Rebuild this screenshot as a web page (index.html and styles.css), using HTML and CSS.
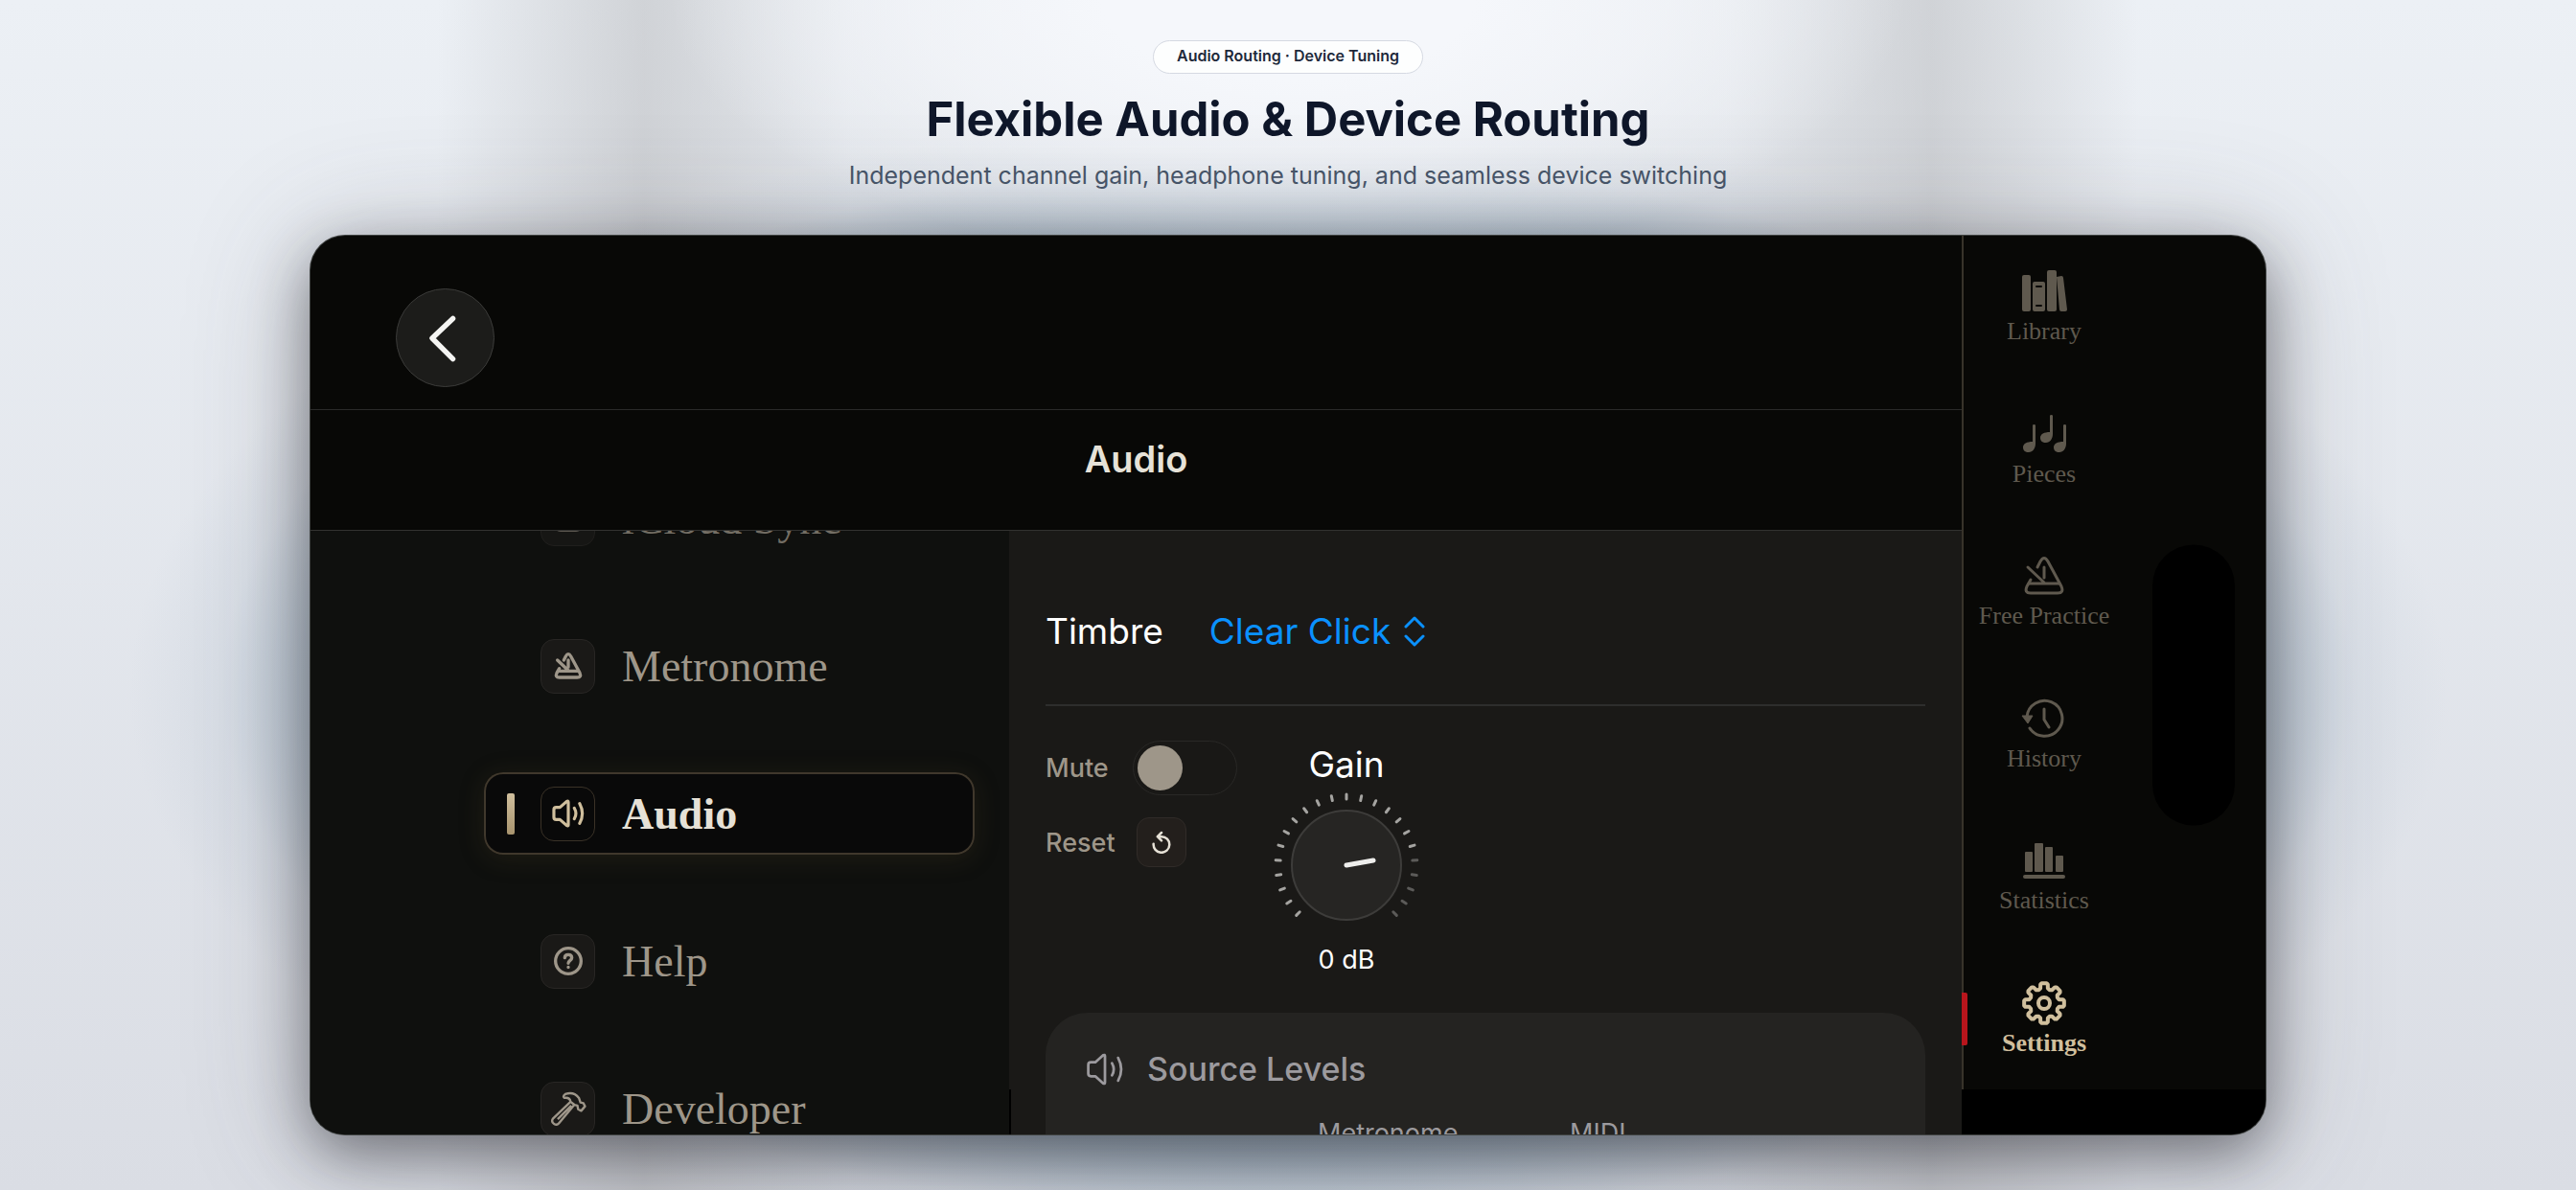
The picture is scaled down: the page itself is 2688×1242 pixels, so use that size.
FILE: index.html
```html
<!DOCTYPE html>
<html lang="en">
<head>
    <meta charset="UTF-8">
    <meta name="viewport" content="width=device-width, initial-scale=1.0">
    <title>Flexible Audio &amp; Device Routing</title>
    <link rel="stylesheet" href="styles.css">
</head>
<body>
    <svg width="0" height="0" class="defs" aria-hidden="true">
        <symbol id="metronome" viewBox="0 0 48 48">
            <g fill="none" stroke="currentColor" stroke-linecap="round" stroke-linejoin="round">
                <path d="M17 15l3-6q4-7 8 0l14 26q3 7-4 7H10q-7 0-4-7l4-7"/>
                <path d="M8 32h32M7 15l17 16M24 15v11"/>
            </g>
        </symbol>
        <symbol id="speaker" viewBox="0 0 48 48">
            <g fill="none" stroke="currentColor" stroke-linecap="round" stroke-linejoin="round">
                <path d="M5 19q0-3 3-3h5l9-8q2-1 2 1v30q0 2-2 1l-9-8H8q-3 0-3-3z"/>
                <path d="M32 17q4 7 0 14M39 11q7 13 0 26"/>
            </g>
        </symbol>
    </svg>

    <header class="intro">
        <span class="badge">Audio Routing · Device Tuning</span>
        <h1>Flexible Audio &amp; Device Routing</h1>
        <p>Independent channel gain, headphone tuning, and seamless device switching</p>
    </header>

    <div class="device">
        <div class="screen">
            <div class="toolbar">
                <button class="back" aria-label="Back">
                    <svg viewBox="0 0 48 48"><path d="M31 5L11 24l20 20" fill="none" stroke="currentColor" stroke-width="5" stroke-linecap="round" stroke-linejoin="round"/></svg>
                </button>
            </div>
            <h2 class="screen-title">Audio</h2>

            <div class="panes">
                <nav class="sections">
                    <a href="#" class="section faded">
                        <span class="tile"><svg viewBox="0 0 48 48"><path d="M12 42q-8 0-8-8t8-8q2-10 12-10t12 10q8 0 8 8t-8 8z" fill="none" stroke="currentColor" stroke-width="5"/></svg></span>
                        iCloud Sync
                    </a>
                    <a href="#" class="section">
                        <span class="tile"><svg class="heavy"><use href="#metronome"/></svg></span>
                        Metronome
                    </a>
                    <a href="#" class="section active">
                        <span class="tile"><svg class="wide"><use href="#speaker"/></svg></span>
                        Audio
                    </a>
                    <a href="#" class="section">
                        <span class="tile"><svg viewBox="0 0 48 48"><g fill="none" stroke="currentColor" stroke-width="5" stroke-linecap="round"><circle cx="24" cy="24" r="20"/><path d="M18.500 19q0-5 5.500-5t5.500 5c0 4-5.500 4-5.500 8.500M24 33.500v.2"/></g></svg></span>
                        Help
                    </a>
                    <a href="#" class="section">
                        <span class="tile"><svg class="wide" viewBox="0 0 48 48"><path d="M20 5q11-4 18 5l2 6 4 1 2 4-5 6-4-2-1-5-4-1L12 43q-3 4-7 1t-1-7l23-22q-1-6-8-5-3-2 1-5zM27 15l5 4M10 38l18-18" fill="none" stroke="currentColor" stroke-width="3" stroke-linejoin="round"/></svg></span>
                        Developer
                    </a>
                </nav>

                <main class="detail">
                    <div class="timbre">
                        <span id="timbre-label">Timbre</span>
                        <button class="picker" aria-labelledby="timbre-label timbre-value">
                            <span id="timbre-value">Clear Click</span>
                            <svg viewBox="0 0 22 32"><path d="M2 11l9-9 9 9M2 21l9 9 9-9" fill="none" stroke="currentColor" stroke-width="3" stroke-linecap="round" stroke-linejoin="round"/></svg>
                        </button>
                    </div>

                    <div class="controls">
                        <div class="switches">
                            <div class="control mute-row">
                                <label for="mute">Mute</label>
                                <input type="checkbox" id="mute" class="toggle">
                            </div>
                            <div class="control">
                                <label for="reset">Reset</label>
                                <button id="reset" class="reset">
                                    <svg viewBox="0 0 24 28"><path d="M2 16a10 10 0 1 0 10-9H9M12 2L7 7l5 5" fill="none" stroke="currentColor" stroke-width="3" stroke-linecap="round" stroke-linejoin="round"/></svg>
                                </button>
                            </div>
                        </div>
                        <div class="gain">
                            <span class="gain-name">Gain</span>
                            <svg class="dial" viewBox="-76 -76 152 152" role="img" aria-label="Gain dial">
                                <g id="ticks"></g>
                                <circle r="57" fill="#262523" stroke="#3d3c3a" stroke-width="2"/>
                                <path d="M0 0L28-5" stroke="#eeeeec" stroke-width="5" stroke-linecap="round"/>
                            </svg>
                            <span class="gain-value">0 dB</span>
                        </div>
                    </div>

                    <section class="levels">
                        <h3>
                            <svg><use href="#speaker"/></svg>
                            Source Levels
                        </h3>
                        <div class="channels">
                            <span>Metronome</span>
                            <span>MIDI</span>
                        </div>
                    </section>
                </main>
            </div>
        </div>

        <aside class="rail">
            <nav class="tabs">
                <a href="#" class="tab">
                    <svg viewBox="0 0 48 48" fill="currentColor"><rect x="1" y="7" width="9" height="38" rx="2"/><path fill-rule="evenodd" d="M14 14h9q2 0 2 2v27q0 2-2 2h-9q-2 0-2-2V16q0-2 2-2zm2 4q-1 0-1 1t1 1h5q1 0 1-1t-1-1zm0 20q-1 0-1 1t1 1h5q1 0 1-1t-1-1z"/><rect x="27" y="2" width="10" height="43" rx="2"/><path d="M37 9l5-1q2 0 2 2l4 33q0 2-2 2h-4q-2 0-2-2z"/></svg>
                    Library
                </a>
                <a href="#" class="tab">
                    <svg viewBox="0 0 48 48" fill="currentColor"><path d="M12 15q0-1 1.500-1t1.500 1v19c0 5-3 9-7 9s-6-2-6-5c0-4 4-6 10-6zM30 5q0-1 1.500-1T33 5v19c0 5-3 9-7 9s-6-2-6-5c0-4 4-6 10-6zM44 15q0-1 1.500-1t1.500 1v19c0 5-3 9-7 9s-6-2-6-5c0-4 4-6 10-6z"/></svg>
                    Pieces
                </a>
                <a href="#" class="tab">
                    <svg><use href="#metronome"/></svg>
                    Free Practice
                </a>
                <a href="#" class="tab">
                    <svg viewBox="0 0 48 48"><g fill="none" stroke="currentColor" stroke-width="3" stroke-linecap="round" stroke-linejoin="round"><path d="M6 22a18.500 18.500 0 1 1 3 12M24 14v11l5 8"/></g><path d="M1 21h11l-5 8z" fill="currentColor" stroke="currentColor" stroke-width="1" stroke-linejoin="round"/></svg>
                    History
                </a>
                <a href="#" class="tab">
                    <svg viewBox="0 0 48 48" fill="currentColor"><rect x="4" y="15" width="8" height="21" rx="1"/><rect x="14" y="6" width="9" height="30" rx="1"/><rect x="25" y="10" width="8" height="26" rx="1"/><rect x="36" y="19" width="8" height="17" rx="1"/><rect x="2" y="39" width="44" height="4" rx="2"/></svg>
                    Statistics
                </a>
                <a href="#" class="tab current">
                    <svg viewBox="0 0 48 48"><g fill="none" stroke="currentColor" stroke-width="4" stroke-linejoin="round"><path id="gear" d=""/><circle cx="24" cy="24" r="6"/></g></svg>
                    Settings
                </a>
            </nav>
            <div class="island"></div>
        </aside>
    </div>

    <script>
        // dial scale: 23 ticks over 270 degrees, dimmed past the pointer
        const step = 270 / 22;
        let ticks = '';
        for (let i = 0; i < 23; i++) {
            const angle = -135 + i * step;
            const color = angle > 81 ? '#5c5b59' : '#a5a4a1';
            ticks += `<path d="M0-69V-74" stroke="${color}" stroke-width="3" stroke-linecap="round" transform="rotate(${angle})"/>`;
        }
        document.getElementById('ticks').innerHTML = ticks;

        // settings gear: eight rounded teeth
        const points = [];
        for (let i = 0; i < 8; i++) {
            [[-14, 16], [-11, 20], [-7, 21], [7, 21], [11, 20], [14, 16], [22.5, 15]].forEach(([offset, radius]) => {
                const a = (i * 45 + offset) * Math.PI / 180;
                points.push(`${24 + radius * Math.sin(a)} ${24 - radius * Math.cos(a)}`);
            });
        }
        document.getElementById('gear').setAttribute('d', 'M' + points.join('L') + 'Z');
    </script>
</body>
</html>
```
FILE: styles.css
```css
* {
    box-sizing: border-box;
}
body {
    margin: 0;
    min-height: 100vh;
    padding: 42px 324px 59px;
    display: flex;
    flex-direction: column;
    font-family: Inter, "Liberation Sans", sans-serif;
    background:
        radial-gradient(ellipse 24% 280px at 50% 0, #f5f7fb 30%, rgba(244, 246, 250, 0.75) 60%, transparent),
        radial-gradient(ellipse 45% 600px at 50% 58%, rgba(98, 134, 160, 0.8) 60%, rgba(110, 142, 166, 0.45) 80%, rgba(150, 170, 190, 0.12) 92%, transparent),
        linear-gradient(90deg, transparent 17%, rgba(150, 150, 152, 0.32) 25%, rgba(200, 202, 206, 0.2) 33%, rgba(200, 202, 206, 0.2) 67%, rgba(150, 150, 152, 0.32) 75%, transparent 83%),
        linear-gradient(#ecf0f5, #dadde4);
}
h1, h2, h3, p {
    margin: 0;
}
a {
    color: inherit;
    text-decoration: none;
}
button {
    padding: 0;
    border: none;
    background: none;
    font: inherit;
    color: inherit;
    cursor: pointer;
}
svg {
    stroke-width: 3px;
}
.defs {
    position: absolute;
}

.intro {
    height: 204px;
    display: flex;
    flex-direction: column;
    align-items: center;
    text-align: center;
}
.badge {
    height: 35px;
    padding: 0 24px;
    border: 1px solid #d5d9e2;
    border-radius: 18px;
    background: #fdfefe;
    font-size: 16px;
    line-height: 30px;
    font-weight: 600;
    color: #1e293b;
}
.intro h1 {
    margin-top: 16px;
    font-size: 49px;
    line-height: 64px;
    font-weight: 700;
    color: #0f172a;
}
.intro p {
    margin-top: 10px;
    font-size: 25px;
    line-height: 32px;
    color: #475569;
}

.device {
    flex: 1;
    height: 938px;
    display: flex;
    border-radius: 36px;
    overflow: hidden;
    background: #080806;
    box-shadow: 0 0 0 1px #3f4241, 0 20px 60px rgba(30, 30, 36, 0.48), 0 10px 130px rgba(70, 70, 78, 0.3);
}
.screen {
    flex: 1;
    display: flex;
    flex-direction: column;
}
.toolbar {
    height: 182px;
    padding: 55px 89px 0;
    border-bottom: 1px solid #2a2a29;
}
.back {
    width: 103px;
    height: 103px;
    display: grid;
    place-items: center;
    border: 1px solid #3c3c3a;
    border-radius: 50%;
    background: #1c1c1a;
    color: #f4f4f2;
}
.back svg {
    width: 52px;
    height: 52px;
}
.screen-title {
    height: 126px;
    padding-top: 26px;
    border-bottom: 1px solid #323230;
    font-size: 38px;
    line-height: 50px;
    font-weight: 600;
    text-align: center;
    color: #e6e2d8;
}
.panes {
    flex: 1;
    height: 630px;
    display: grid;
    grid-template-columns: 729fr 994fr;
    overflow: hidden;
}

.sections {
    height: 630px;
    padding: 0 36px 0 181px;
    display: flex;
    flex-direction: column;
    gap: 68px;
    background: #0f100e;
    overflow: hidden;
}
.section {
    position: relative;
    flex: none;
    height: 86px;
    padding-left: 59px;
    display: flex;
    align-items: center;
    gap: 28px;
    border-radius: 20px;
    font-family: "Liberation Serif", serif;
    font-size: 46px;
    color: #9e9689;
}
.section:first-child {
    margin-top: -56px;
}
.faded {
    opacity: 0.7;
}
.tile {
    width: 57px;
    height: 57px;
    display: grid;
    place-items: center;
    border: 1px solid #282624;
    border-radius: 14px;
    background: #1a1917;
}
.tile svg {
    width: 32px;
    height: 32px;
}
.tile .wide {
    width: 38px;
    height: 38px;
    stroke-width: 4px;
}
.tile .heavy {
    stroke-width: 5px;
}
.active {
    background: #090909;
    box-shadow: inset 0 0 0 2px #40382c, 0 4px 26px rgba(70, 60, 34, 0.3);
    color: #e6e1d6;
    font-weight: 700;
}
.active::before {
    content: "";
    position: absolute;
    left: 24px;
    top: 22px;
    width: 8px;
    height: 43px;
    border-radius: 2px;
    background: linear-gradient(#d0bf9d, #a8946e);
}
.active .tile {
    background: #090909;
    border-color: #3a3227;
    color: #d0bf9d;
}

.detail {
    height: 630px;
    padding: 0 38px 0 38px;
    background: linear-gradient(#000, #000) left bottom / 2px 47px no-repeat, #1a1917;
    overflow: hidden;
}
.timbre {
    height: 183px;
    padding-top: 80px;
    display: flex;
    gap: 48px;
    border-bottom: 2px solid #2e2e2d;
    font-size: 37px;
    line-height: 50px;
    color: #fff;
}
.picker {
    display: flex;
    align-items: center;
    align-self: flex-start;
    gap: 14px;
    color: #0a91ff;
}
.picker svg {
    width: 22px;
    height: 32px;
}
.controls {
    padding-top: 36px;
    display: flex;
    gap: 38px;
}
.switches {
    width: 200px;
    display: flex;
    flex-direction: column;
    gap: 23px;
    font-size: 27px;
    font-weight: 500;
    color: #9e9689;
}
.control {
    display: flex;
    align-items: center;
    gap: 22px;
}
.mute-row {
    justify-content: space-between;
}
.toggle {
    appearance: none;
    width: 109px;
    height: 57px;
    margin: 0;
    padding: 4px;
    border: 1px solid #292826;
    border-radius: 29px;
    background: #191816;
}
.toggle::before {
    content: "";
    display: block;
    width: 47px;
    height: 47px;
    border-radius: 50%;
    background: #9e9689;
}
.toggle:checked::before {
    margin-left: auto;
}
.reset {
    width: 52px;
    height: 52px;
    display: grid;
    place-items: center;
    border: 1px solid #302b28;
    border-radius: 13px;
    background: #231f1c;
    color: #e6e1d6;
}
.reset svg {
    width: 20px;
    height: 24px;
}
.gain {
    width: 152px;
    display: flex;
    flex-direction: column;
    align-items: center;
    gap: 4px;
    color: #fff;
}
.gain-name {
    font-size: 37px;
    line-height: 50px;
}
.dial {
    width: 152px;
    height: 152px;
}
.gain-value {
    font-size: 27px;
    line-height: 38px;
}
.levels {
    margin-top: 36px;
    height: 300px;
    padding: 34px 40px;
    border-radius: 44px;
    background: #242321;
    color: #9c9a9e;
}
.levels h3 {
    display: flex;
    align-items: center;
    gap: 22px;
    font-size: 34px;
    line-height: 50px;
    font-weight: 500;
}
.levels svg {
    width: 44px;
    height: 44px;
}
.channels {
    margin-top: 24px;
    padding-left: 244px;
    display: grid;
    grid-template-columns: 263px 1fr;
    font-size: 27px;
    line-height: 36px;
}

/* right rail */
.rail {
    position: relative;
    width: 317px;
    padding-bottom: 47px;
    background: linear-gradient(#000, #000) bottom / 100% 47px no-repeat;
}
.tabs {
    height: 100%;
    padding: 34px 147px 34px 0;
    display: flex;
    flex-direction: column;
    justify-content: space-between;
    border-left: 2px solid #38332a;
}
.tab {
    position: relative;
    height: 80px;
    display: flex;
    flex-direction: column;
    align-items: center;
    gap: 4px;
    font-family: "Liberation Serif", serif;
    font-size: 26px;
    line-height: 28px;
    white-space: nowrap;
    color: #5f594e;
}
.tab svg {
    width: 48px;
    height: 48px;
}
.current {
    color: #d0bf9d;
    font-weight: 700;
}
.current::before {
    content: "";
    position: absolute;
    left: -2px;
    top: 13px;
    width: 6px;
    height: 55px;
    border-radius: 0 2px 2px 0;
    background: #b8151c;
}
.island {
    position: absolute;
    top: 50%;
    right: 32px;
    width: 86px;
    height: 293px;
    border-radius: 43px;
    background: #000;
    transform: translateY(-50%);
}
```
